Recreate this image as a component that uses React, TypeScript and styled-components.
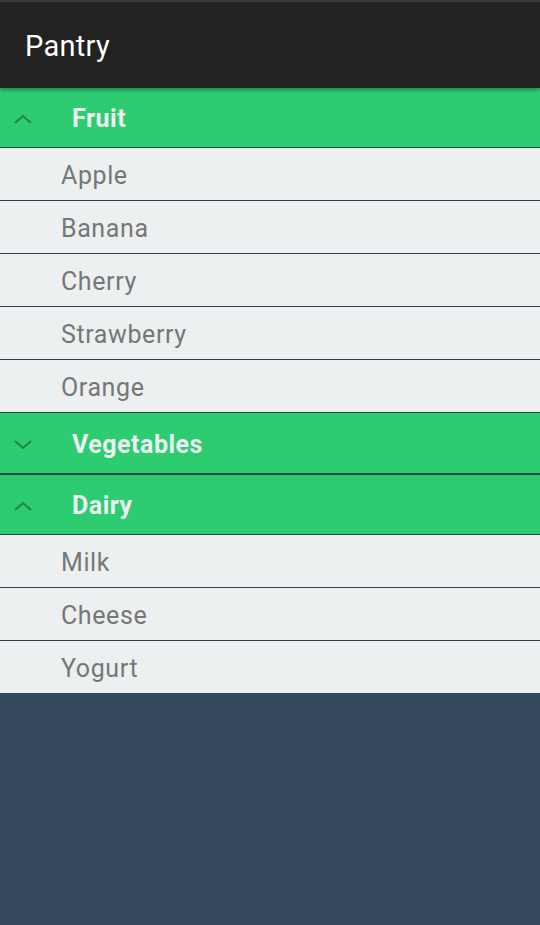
import React from "react";
import styled, { createGlobalStyle } from "styled-components";

const Global = createGlobalStyle`
  html, body { margin: 0; padding: 0; background: #34495e; }
  body { font-family: Roboto, "Noto Sans", sans-serif; }
`;

const Page = styled.div`
  min-height: 925px;
  background: #34495e;
  display: flex;
  flex-direction: column;
`;

const TopBar = styled.header`
  height: 86px;
  box-sizing: border-box;
  height: 88px;
  padding-top: 2px;
  border-top: 2px solid #3a3a3a;
  background: #222222;
  display: flex;
  align-items: center;
  padding-left: 25px;
  color: #ffffff;
  font-size: 29px;
  letter-spacing: 0.3px;
  position: relative;
  z-index: 1;
  box-shadow: 0 2px 4px rgba(0, 0, 0, 0.35);
`;

const GroupHeader = styled.div<{ $open: boolean }>`
  height: ${(p) => (p.$open ? 59 : 60)}px;
  padding-top: 2px;
  box-sizing: content-box;
  height: ${(p) => (p.$open ? 57 : 58)}px;
  border-bottom: ${(p) => (p.$open ? 1 : 2)}px solid #2c3e50;
  background: #2ecc71;
  display: flex;
  align-items: center;
  color: #ecf0f1;
  font-weight: 700;
  font-size: 25px;
  letter-spacing: 0.5px;
`;

const IconSlot = styled.div`
  width: 72px;
  padding-left: 13px;
  box-sizing: border-box;
  display: flex;
  align-items: center;
  color: #1e8447;
`;

const Item = styled.div<{ $last?: boolean }>`
  height: 50px;
  padding-top: 2px;
  border-bottom: 1px solid ${(p) => (p.$last ? "#34495e" : "#2c3e50")};
  background: #ecf0f1;
  display: flex;
  align-items: center;
  padding-left: 61px;
  color: #777777;
  font-size: 25px;
  letter-spacing: 0.6px;
`;

const Chevron = ({ up }: { up: boolean }) => (
  <svg width="20" height="12" viewBox="0 0 20 12" fill="none">
    <path
      d={up ? "M2 10 L10 3 L18 10" : "M2 3 L10 10 L18 3"}
      stroke="currentColor"
      strokeWidth="2"
    />
  </svg>
);

const groups = [
  { name: "Fruit", open: true, items: ["Apple", "Banana", "Cherry", "Strawberry", "Orange"] },
  { name: "Vegetables", open: false, items: [] },
  { name: "Dairy", open: true, items: ["Milk", "Cheese", "Yogurt"] },
];

export default function App() {
  return (
    <Page>
      <Global />
      <TopBar>Pantry</TopBar>
      {groups.map((g, gi) => (
        <React.Fragment key={g.name}>
          <GroupHeader $open={g.open}>
            <IconSlot>
              <Chevron up={g.open} />
            </IconSlot>
            {g.name}
          </GroupHeader>
          {g.open &&
            g.items.map((it, i) => (
              <Item key={it} $last={gi === groups.length - 1 && i === g.items.length - 1}>
                {it}
              </Item>
            ))}
        </React.Fragment>
      ))}
    </Page>
  );
}
